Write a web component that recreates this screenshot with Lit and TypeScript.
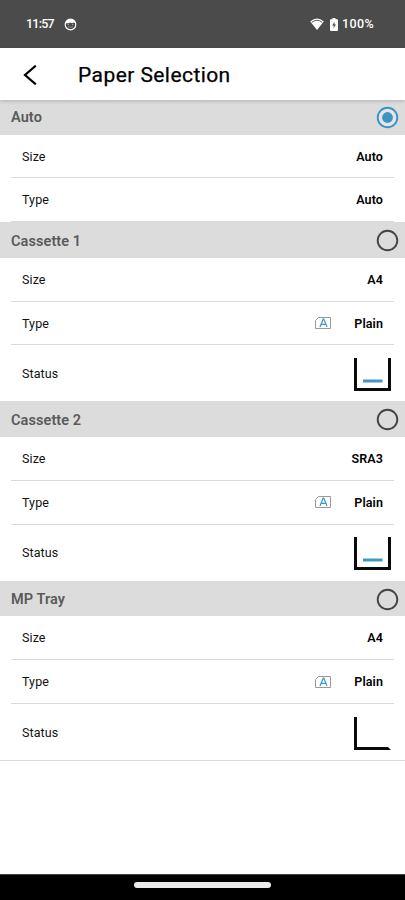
import { LitElement, html, css, svg, nothing } from "lit";
import { customElement, property, state } from "lit/decorators.js";
import { classMap } from "lit/directives/class-map.js";

type TrayStatus = "loaded" | "open";

interface PaperSource {
  name: string;
  size: string;
  type: string;
  mark?: boolean;
  status?: TrayStatus;
}

const SOURCES: PaperSource[] = [
  { name: "Auto", size: "Auto", type: "Auto" },
  { name: "Cassette 1", size: "A4", type: "Plain", mark: true, status: "loaded" },
  { name: "Cassette 2", size: "SRA3", type: "Plain", mark: true, status: "loaded" },
  { name: "MP Tray", size: "A4", type: "Plain", mark: true, status: "open" },
];

@customElement("status-bar")
export class StatusBar extends LitElement {
  static styles = css`
    :host {
      display: flex;
      align-items: center;
      flex: none;
      box-sizing: border-box;
      height: 48px;
      padding: 0 31px 0 26px;
      background: #4b4b4b;
      color: #fff;
      font: 500 12.5px/16px Roboto, sans-serif;
    }
    svg { display: block; }
    .time { width: 28px; white-space: nowrap; font-size: 12.5px; letter-spacing: -0.75px; }
    .face { margin-left: 10px; }
    .spacer { flex: 1; }
    .battery { margin: 0 4px 0 6px; }
    .percent { letter-spacing: 0.35px; }
  `;
  render() {
    return html`
      <span class="time">11:57</span>
      <svg class="face" width="13" height="13" viewBox="0 0 13 13">
        <circle cx="6.5" cy="6.5" r="5.3" fill="none" stroke="#fff" stroke-width="1.2" />
        <path d="M1.500 5.300C2.200 2.800 4 1.300 6.500 1.300s4.300 1.500 5 4L9.500 4.500 8 5.300 6.500 4.600 4.500 5.300z" fill="#fff" />
        <path d="M4.200 8.600q2.300 1.500 4.600 0" stroke="#999" fill="none" stroke-width=".8" />
        <path d="M3.700 6.500h1.200M8.100 6.500h1.200" stroke="#ccc" stroke-width=".8" />
      </svg>
      <span class="spacer"></span>
      <svg width="14" height="12" viewBox="0 0 14 12">
        <path d="M7 12 .2 3.500Q7-2.500 13.800 3.500z" fill="#fff" />
        <path d="M1.700 4.400Q7 0 12.300 4.400" fill="none" stroke="#4b4b4b" stroke-width=".9" />
      </svg>
      <svg class="battery" width="8" height="13" viewBox="0 0 8 13">
        <path d="M2.500 0h3v1.300H7a1 1 0 0 1 1 1V12a1 1 0 0 1-1 1H1a1 1 0 0 1-1-1V2.300a1 1 0 0 1 1-1h1.500z" fill="#fff" />
        <path d="M4.500 3.800 2.200 7.600h1.500v2.700L5.900 6.600H4.500z" fill="#4b4b4b" />
      </svg>
      <span class="percent">100%</span>
    `;
  }
}

@customElement("title-bar")
export class TitleBar extends LitElement {
  static styles = css`
    :host {
      display: flex;
      align-items: center;
      flex: none;
      position: relative;
      z-index: 1;
      box-sizing: border-box;
      height: 51.5px;
      padding: 2px 0 0 23px;
      background: #fff;
      color: #000;
      box-shadow: 0 1px 4px rgba(0, 0, 0, 0.2);
    }
    .title {
      margin-left: 41px;
      font: 400 21px/28px Roboto, sans-serif;
      letter-spacing: 0.43px;
      -webkit-text-stroke: 0.25px #000;
      white-space: nowrap;
    }
  `;
  render() {
    return html`
      <svg width="14" height="20" viewBox="0 0 14 20">
        <path d="M12.800.700 2 10l10.800 9.300" fill="none" stroke="#000" stroke-width="2.200" />
      </svg>
      <span class="title">Paper Selection</span>
    `;
  }
}

@customElement("paper-source")
export class PaperSourceItem extends LitElement {
  @property({ attribute: false }) source!: PaperSource;
  @property({ type: Boolean }) selected = false;

  static styles = css`
    :host { display: block; font-family: Roboto, sans-serif; }
    svg { display: block; flex: none; }
    .head {
      display: flex;
      align-items: center;
      justify-content: space-between;
      box-sizing: border-box;
      height: 35.75px;
      padding: 1.5px 6px 0 11px;
      background: #dcdcdc;
      color: #5a5a5a;
      font-size: 14.5px;
      font-weight: 600;
      letter-spacing: 0.08px;
      cursor: pointer;
    }
    .name { padding-top: 1px; }
    .row {
      display: flex;
      align-items: center;
      box-sizing: border-box;
      height: 43.75px;
      margin: 0 11px;
      padding: 0.5px 11px 0;
      border-bottom: 1px solid #dadada;
      color: #111;
      font-size: 12.5px;
      letter-spacing: 0.1px;
    }
    .row.status { height: 56px; margin: 0; padding: 1.5px 14px 0 22px; border-bottom-color: transparent; }
    .row.open { border-bottom-color: #dadada; height: 57px; }
    .tray { position: relative; top: 1px; }
    .label { flex: 1; }
    .value { min-width: 28px; text-align: right; font-weight: 600; color: #000; }
    .mark { margin-right: 23.5px; }
  `;

  private radio() {
    const color = this.selected ? "#3d93c5" : "#444";
    return html`<svg width="23" height="23" viewBox="0 0 23 23">
      <circle cx="11.500" cy="11.500" r="9.800" fill=${this.selected ? "#e6e6e6" : "none"} stroke=${color} stroke-width="1.900" />
      ${this.selected ? svg`<circle cx="11.500" cy="11.500" r="5.400" fill=${color} />` : nothing}
    </svg>`;
  }

  private mark() {
    return html`<svg class="mark" width="16" height="12" viewBox="0 0 16 12">
      <path d="M3.500.500h12v11H.500v-8z" fill="#fff" stroke="#999" />
      <path d="M5 9.900 8.200 2h.600l3.200 7.900M6.200 7.300h4.600" fill="none" stroke="#3d93c5" stroke-width="1.200" />
    </svg>`;
  }

  private tray(status: TrayStatus) {
    return html`<svg class="tray" width="37" height="33" viewBox="0 0 37 33">
      ${status === "loaded"
        ? svg`<path d="M1.500 0v31.500h34V0" fill="none" stroke="#0a0a0a" stroke-width="3" />
              <path d="M9 23h19.500" stroke="#4596c4" stroke-width="3" />`
        : svg`<path d="M0 0h3v30h31l3 3H0z" fill="#0a0a0a" />`}
    </svg>`;
  }

  render() {
    const s = this.source;
    return html`
      <div class="head"><span class="name">${s.name}</span>${this.radio()}</div>
      <div class="row"><span class="label">Size</span><span class="value">${s.size}</span></div>
      <div class="row">
        <span class="label">Type</span>${s.mark ? this.mark() : nothing}<span class="value">${s.type}</span>
      </div>
      ${s.status
        ? html`<div class=${classMap({ row: true, status: true, open: s.status === "open" })}>
            <span class="label">Status</span>${this.tray(s.status)}
          </div>`
        : nothing}
    `;
  }
}

@customElement("app-root")
export class AppRoot extends LitElement {
  @state() private selected = 0;

  static styles = css`
    :host {
      display: flex;
      flex-direction: column;
      width: 100%;
      height: 100vh;
      background: #fff;
      overflow: hidden;
    }
    .list { flex: 1; min-height: 0; margin-top: -0.75px; }
    .nav {
      display: flex;
      justify-content: center;
      flex: none;
      box-sizing: border-box;
      height: 26px;
      padding-top: 7px;
      border-top: 1px solid #444;
      background: #000;
    }
    .handle { width: 137px; height: 5.5px; border-radius: 3px; background: #ebebeb; }
  `;

  render() {
    return html`
      <status-bar></status-bar>
      <title-bar></title-bar>
      <div class="list">
        ${SOURCES.map(
          (s, i) => html`<paper-source
            .source=${s}
            ?selected=${i === this.selected}
            @click=${() => (this.selected = i)}
          ></paper-source>`
        )}
      </div>
      <div class="nav"><div class="handle"></div></div>
    `;
  }
}
